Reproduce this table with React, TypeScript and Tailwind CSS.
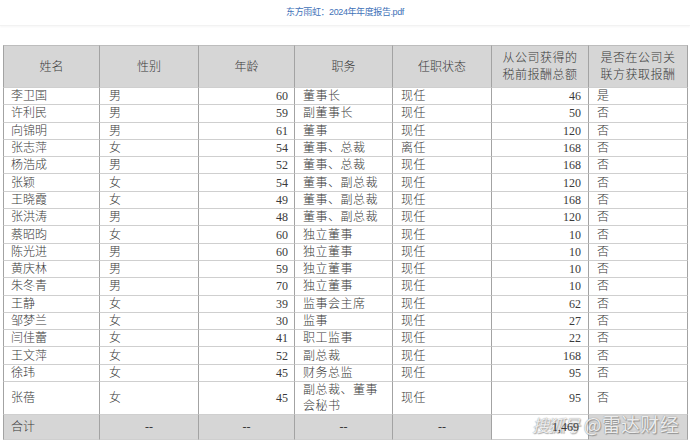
type Row = {
  name: string;
  sex: string;
  age: number;
  role: string;
  status: string;
  pay: number;
  related: string;
};

const rows: Row[] = [
  { name: "李卫国", sex: "男", age: 60, role: "董事长", status: "现任", pay: 46, related: "是" },
  { name: "许利民", sex: "男", age: 59, role: "副董事长", status: "现任", pay: 50, related: "否" },
  { name: "向锦明", sex: "男", age: 61, role: "董事", status: "现任", pay: 120, related: "否" },
  { name: "张志萍", sex: "女", age: 54, role: "董事、总裁", status: "离任", pay: 168, related: "否" },
  { name: "杨浩成", sex: "男", age: 52, role: "董事、总裁", status: "现任", pay: 168, related: "否" },
  { name: "张颖", sex: "女", age: 54, role: "董事、副总裁", status: "现任", pay: 120, related: "否" },
  { name: "王晓霞", sex: "女", age: 49, role: "董事、副总裁", status: "现任", pay: 168, related: "否" },
  { name: "张洪涛", sex: "男", age: 48, role: "董事、副总裁", status: "现任", pay: 120, related: "否" },
  { name: "蔡昭昀", sex: "女", age: 60, role: "独立董事", status: "现任", pay: 10, related: "否" },
  { name: "陈光进", sex: "男", age: 60, role: "独立董事", status: "现任", pay: 10, related: "否" },
  { name: "黄庆林", sex: "男", age: 59, role: "独立董事", status: "现任", pay: 10, related: "否" },
  { name: "朱冬青", sex: "男", age: 70, role: "独立董事", status: "现任", pay: 10, related: "否" },
  { name: "王静", sex: "女", age: 39, role: "监事会主席", status: "现任", pay: 62, related: "否" },
  { name: "邹梦兰", sex: "女", age: 30, role: "监事", status: "现任", pay: 27, related: "否" },
  { name: "闫佳蕾", sex: "女", age: 41, role: "职工监事", status: "现任", pay: 22, related: "否" },
  { name: "王文萍", sex: "女", age: 52, role: "副总裁", status: "现任", pay: 168, related: "否" },
  { name: "徐玮", sex: "女", age: 45, role: "财务总监", status: "现任", pay: 95, related: "否" },
];

const cell = "border-r border-b border-r-[#a3a3a3] border-b-[#cfcfcf] align-middle p-0";

export default function App() {
  return (
    <div
      className="relative w-[690px] h-[440px] overflow-hidden bg-white text-[#3a3a3a] font-light"
      style={{ fontFamily: '"Liberation Serif", "Noto Sans CJK SC", serif' }}
    >
      {/* file title */}
      <div className="h-[26px] flex items-center justify-center border-b border-[#f2f2f2] shadow-[0_1px_2px_rgba(0,0,0,0.04)]">
        <span className="text-[9px] tracking-[-0.4px] font-normal text-[#3f72b8] font-['Liberation_Sans','Noto_Sans_CJK_SC',sans-serif]">
          东方雨虹：2024年年度报告.pdf
        </span>
      </div>

      <table className="mt-[19px] ml-[3px] w-[685px] table-fixed border-separate border-spacing-0 text-[12px] leading-[14px]">
        <colgroup>
          <col className="w-[97px]" />
          <col className="w-[99px]" />
          <col className="w-[96px]" />
          <col className="w-[98px]" />
          <col className="w-[99px]" />
          <col className="w-[97px]" />
          <col className="w-[99px]" />
        </colgroup>
        <thead>
          <tr className="bg-[#d6d6d6] h-[43px]">
            {["姓名", "性别", "年龄", "职务", "任职状态"].map((h, i) => (
              <th
                key={h}
                className={`${cell} border-t border-t-[#bdbdbd] font-light text-center ${i === 0 ? "border-l border-l-[#a3a3a3]" : ""}`}
              >
                {h}
              </th>
            ))}
            <th className={`${cell} border-t border-t-[#bdbdbd] font-light text-center leading-[17px] tracking-[0.5px]`}>
              从公司获得的
              <br />
              税前报酬总额
            </th>
            <th className={`${cell} border-t border-t-[#bdbdbd] font-light text-center leading-[17px] tracking-[0.5px]`}>
              是否在公司关
              <br />
              联方获取报酬
            </th>
          </tr>
        </thead>
        <tbody>
          {rows.map((r) => (
            <tr key={r.name} className="h-[17.3px]">
              <td className={`${cell} border-l border-l-[#a3a3a3] pl-[7px]`}>{r.name}</td>
              <td className={`${cell} pl-[9px]`}>{r.sex}</td>
              <td className={`${cell} text-right pr-[6px]`}>{r.age}</td>
              <td className={`${cell} pl-[8px] tracking-[0.5px]`}>{r.role}</td>
              <td className={`${cell} pl-[8px] tracking-[0.5px]`}>{r.status}</td>
              <td className={`${cell} text-right pr-[7px]`}>{r.pay}</td>
              <td className={`${cell} pl-[8px]`}>{r.related}</td>
            </tr>
          ))}
          <tr className="h-[30px]">
            <td className={`${cell} border-l border-l-[#a3a3a3] pl-[7px]`}>张蓓</td>
            <td className={`${cell} pl-[9px]`}>女</td>
            <td className={`${cell} text-right pr-[6px]`}>45</td>
            <td className={`${cell} pl-[8px] tracking-[0.5px] leading-[16px]`}>
              副总裁、董事
              <br />
              会秘书
            </td>
            <td className={`${cell} pl-[8px] tracking-[0.5px]`}>现任</td>
            <td className={`${cell} text-right pr-[7px]`}>95</td>
            <td className={`${cell} pl-[8px]`}>否</td>
          </tr>
          <tr className="h-[25px]">
            <td className={`${cell} bg-[#d6d6d6] border-l border-l-[#a3a3a3] pl-[7px]`}>合计</td>
            <td className={`${cell} bg-[#d6d6d6] text-center`}>--</td>
            <td className={`${cell} bg-[#d6d6d6] text-center`}>--</td>
            <td className={`${cell} bg-[#d6d6d6] text-center`}>--</td>
            <td className={`${cell} bg-[#d6d6d6] text-center`}>--</td>
            <td className={`${cell} bg-white text-right pr-[9px] align-bottom`}>
              <span className="relative z-10 block leading-[12px] pb-[1px]">1,469</span>
            </td>
            <td className={`${cell} bg-[#d6d6d6]`}></td>
          </tr>
        </tbody>
      </table>

      {/* watermark */}
      <div className="absolute left-[532px] top-[410px] flex items-center gap-[5px] text-white/85 font-['Noto_Sans_CJK_SC',sans-serif] [text-shadow:0_0_1px_#777,1px_1px_1px_rgba(0,0,0,0.3)]">
        <span className="text-[17px] italic font-normal tracking-[-1.5px]">搜狐号</span>
        <span className="text-[19px] font-normal tracking-[0.3px]">@雷达财经</span>
      </div>
    </div>
  );
}
